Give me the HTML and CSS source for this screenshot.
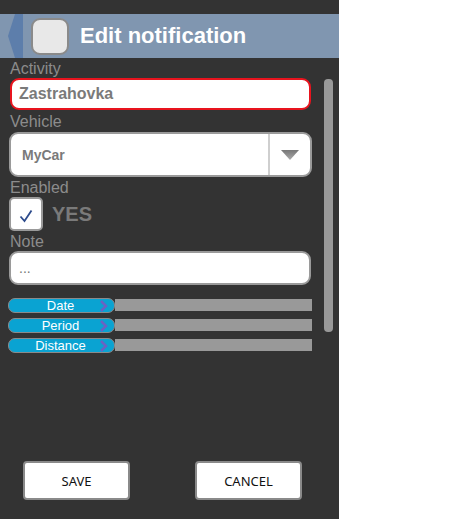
FILE: index.html
```html
<!DOCTYPE html>
<html>
<head>
<meta charset="utf-8">
<link rel="stylesheet" href="styles.css">
</head>
<body>
<div class="phone">
  <div class="header">
    <svg class="back" width="23" height="44" viewBox="0 0 23 44"><path d="M15 0 H23 V44 H15 L8 22 Z" fill="#5d7eab"/></svg>
    <div class="hbtn"></div>
    <div class="title">Edit notification</div>
  </div>
  <div class="content">
    <div class="form">
      <div class="label">Activity</div>
      <div class="input input-active">Zastrahovka</div>
      <div class="label label-vehicle">Vehicle</div>
      <div class="select">
        <div class="select-text">MyCar</div>
        <div class="select-arrow">
          <svg width="18" height="10" viewBox="0 0 18 10"><defs><linearGradient id="g" x1="0" y1="0" x2="0" y2="1"><stop offset="0" stop-color="#777"/><stop offset="1" stop-color="#aaa"/></linearGradient></defs><path d="M0 0 H18 L9 10 Z" fill="url(#g)"/></svg>
        </div>
      </div>
      <div class="label">Enabled</div>
      <div class="check-row">
        <div class="checkbox">
          <svg width="14" height="14" viewBox="0 0 14 14"><path d="M1.5 7.5 L5.5 12 L12.5 1.5" fill="none" stroke="#2d4b8c" stroke-width="1.8"/></svg>
        </div>
        <div class="yes">YES</div>
      </div>
      <div class="label">Note</div>
      <div class="input input-note">...</div>
      <div class="bars">
        <div class="bar-row"><div class="pill"><span>Date</span><svg class="chev" width="8" height="12" viewBox="0 0 8 12"><path d="M1 1 L6 6 L1 11" fill="none" stroke="#6a63c4" stroke-width="2.5"/></svg></div><div class="track"></div></div>
        <div class="bar-row"><div class="pill"><span>Period</span><svg class="chev" width="8" height="12" viewBox="0 0 8 12"><path d="M1 1 L6 6 L1 11" fill="none" stroke="#6a63c4" stroke-width="2.5"/></svg></div><div class="track"></div></div>
        <div class="bar-row"><div class="pill"><span>Distance</span><svg class="chev" width="8" height="12" viewBox="0 0 8 12"><path d="M1 1 L6 6 L1 11" fill="none" stroke="#6a63c4" stroke-width="2.5"/></svg></div><div class="track"></div></div>
      </div>
    </div>
    <div class="scrollbar"></div>
  </div>
  <div class="buttons">
    <div class="btn">SAVE</div>
    <div class="btn">CANCEL</div>
  </div>
</div>
</body>
</html>
```
FILE: styles.css
```css
html, body {
  margin: 0;
  padding: 0;
  background: #ffffff;
}
.phone {
  width: 339px;
  height: 519px;
  background: #333333;
  font-family: "Liberation Sans", Arial, sans-serif;
  display: flex;
  flex-direction: column;
}
.header {
  margin-top: 14px;
  height: 44px;
  background: #8096b0;
  display: flex;
  align-items: center;
}
.back {
  display: block;
  flex: none;
}
.hbtn {
  margin-left: 8px;
  width: 34px;
  height: 33px;
  background: #e8e8e8;
  border: 2px solid #8a8a8a;
  border-radius: 9px;
  flex: none;
}
.title {
  margin-left: 11px;
  color: #ffffff;
  font-weight: bold;
  font-size: 22px;
  line-height: 26px;
}
.content {
  display: flex;
}
.form {
  margin-left: 9px;
  width: 303px;
  display: flex;
  flex-direction: column;
}
.label {
  box-sizing: border-box;
  color: #8c8c8c;
  font-size: 16px;
  line-height: 18px;
  height: 20px;
  padding-top: 2px;
  margin-left: 1px;
}
.label-vehicle {
  height: 21px;
  margin-top: 1px;
}
.input {
  box-sizing: border-box;
  background: #ffffff;
  border: 2px solid #9a9a9a;
  border-radius: 9px;
  height: 34px;
  display: flex;
  align-items: center;
  padding-left: 8px;
  color: #7a7a7a;
  font-weight: bold;
  font-size: 16px;
}
.input-active {
  margin-left: 1px;
  width: 301px;
  height: 32px;
  border-color: #e8141e;
  padding-left: 7px;
}
.input-note {
  width: 302px;
  font-size: 14px;
  font-weight: normal;
  color: #777;
}
.select {
  box-sizing: border-box;
  height: 45px;
  width: 303px;
  background: #ffffff;
  border: 2px solid #9a9a9a;
  border-radius: 9px;
  display: flex;
  align-items: center;
}
.select-text {
  flex: 1;
  padding-left: 11px;
  color: #7a7a7a;
  font-weight: bold;
  font-size: 14px;
}
.select-arrow {
  width: 40px;
  align-self: stretch;
  border-left: 2px solid #cfcfcf;
  display: flex;
  align-items: center;
  justify-content: center;
}
.select-arrow svg {
  display: block;
}
.check-row {
  display: flex;
  align-items: center;
  height: 34px;
}
.checkbox {
  box-sizing: border-box;
  width: 34px;
  height: 34px;
  background: #ffffff;
  border: 2px solid #9a9a9a;
  border-radius: 5px;
  display: flex;
  align-items: center;
  justify-content: center;
  padding-top: 4px;
}
.checkbox svg {
  display: block;
}
.yes {
  margin-left: 9px;
  color: #7a7a7a;
  font-weight: bold;
  font-size: 20px;
}
.bars {
  margin-top: 13px;
  margin-left: -1px;
  display: flex;
  flex-direction: column;
  gap: 6px;
}
.bar-row {
  display: flex;
  align-items: center;
  height: 14px;
}
.pill {
  box-sizing: border-box;
  width: 107px;
  height: 15px;
  background: #0aa3d2;
  border: 1px solid #8a8a8a;
  border-radius: 7px;
  position: relative;
  color: #ffffff;
  font-size: 13px;
  line-height: 13px;
  text-align: center;
  padding-right: 2px;
  flex: none;
}
.chev {
  position: absolute;
  right: 6px;
  top: 1px;
}
.track {
  width: 197px;
  height: 12px;
  background: #999999;
}
.scrollbar {
  margin-top: 21px;
  margin-left: 12px;
  width: 9px;
  height: 253px;
  background: #999999;
  border-radius: 4px;
}
.buttons {
  margin-top: auto;
  margin-bottom: 19px;
  display: flex;
  padding-left: 23px;
  gap: 65px;
}
.btn {
  box-sizing: border-box;
  width: 107px;
  height: 39px;
  background: #ffffff;
  border: 2px solid #8a8a8a;
  border-radius: 4px;
  display: flex;
  align-items: center;
  justify-content: center;
  font-family: "Noto Sans", "DejaVu Sans", sans-serif;
  font-size: 13px;
  color: #111111;
}
```
